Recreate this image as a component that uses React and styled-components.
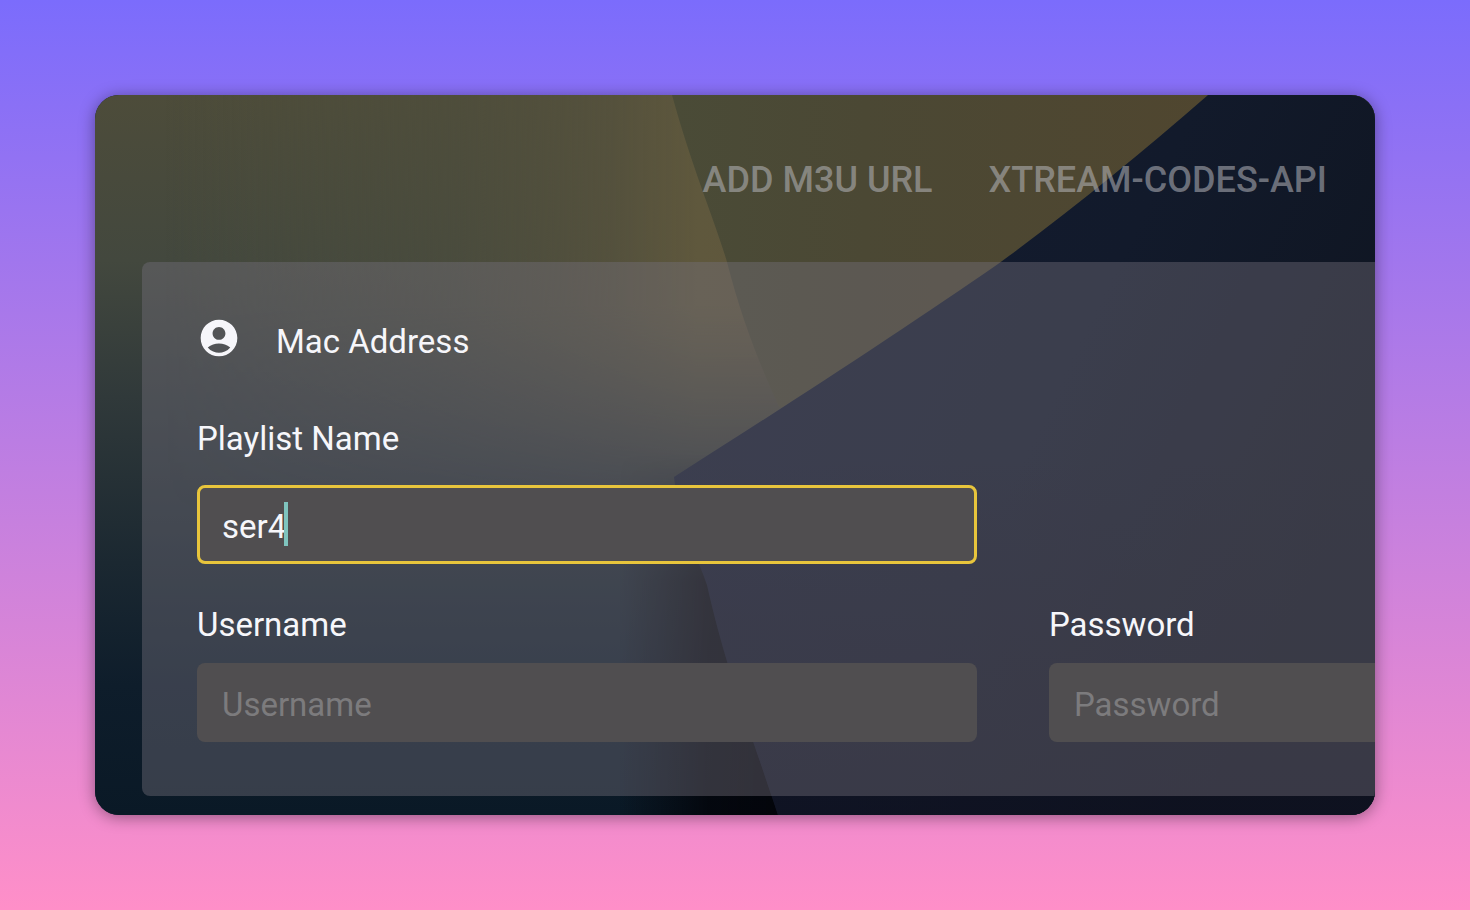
import React, { useState } from 'react';
import styled, { createGlobalStyle } from 'styled-components';
import { MdAccountCircle } from 'react-icons/md';

const GlobalStyle = createGlobalStyle`
  * {
    box-sizing: border-box;
  }
  body {
    margin: 0;
    font-family: Roboto, 'Liberation Sans', sans-serif;
  }
`;

const Page = styled.div`
  display: flex;
  min-height: 100vh;
  padding: 95px;
  background: linear-gradient(180deg, #7b6cfc 0%, #ff8fc8 100%);
`;

const Screen = styled.main`
  position: relative;
  flex: 1;
  min-width: 0;
  padding: 0 0 19px 47px;
  border-radius: 24px;
  overflow: hidden;
  background-color: #0c1c2a;
  box-shadow: 0 2px 16px rgba(0, 0, 0, 0.4);
`;

// WALLPAPER STYLE
const WallpaperSvg = styled.svg`
  position: absolute;
  inset: 0;
  width: 100%;
  height: 100%;
`;

const Content = styled.div`
  position: relative;
`;

// TABS STYLE
const Tabs = styled.nav`
  display: flex;
  justify-content: flex-end;
  align-items: center;
  gap: 56px;
  height: 167px;
  padding: 3px 48px 0 0;
`;

const Tab = styled.button`
  padding: 0;
  border: 0;
  background: none;
  color: rgba(186, 186, 192, 0.54);
  font-family: inherit;
  font-size: 36px;
  font-weight: 500;
  line-height: 48px;
  text-transform: uppercase;
  white-space: nowrap;
  cursor: pointer;
`;

// FORM STYLE
const Panel = styled.form`
  width: 142%;
  padding: 54px 64px 54px 55px;
  border-radius: 8px;
  background-color: rgba(116, 112, 124, 0.42);
`;

const PanelHeader = styled.div`
  display: flex;
  align-items: flex-start;
  gap: 35px;
  margin-bottom: 51px;
  color: #f6f6fa;
`;

const PanelTitle = styled.span`
  font-size: 33px;
  line-height: 52px;
`;

const Fields = styled.div`
  display: grid;
  grid-template-columns: 1fr 1fr;
  gap: 41px 72px;
`;

const Field = styled.div`
  display: flex;
  flex-direction: column;
  grid-column-start: ${({ $column }) => $column};
  gap: ${({ $active }) => ($active ? '26px' : '18px')};
`;

const Label = styled.label`
  color: #f6f6fa;
  font-size: 33px;
  line-height: 40px;
`;

const InputBox = styled.div`
  position: relative;
  display: flex;
`;

const Input = styled.input`
  flex: 1;
  min-width: 0;
  height: 79px;
  padding: 3px 22px 0;
  border: 3px solid ${({ $active }) => ($active ? '#e8c53c' : 'transparent')};
  border-radius: 8px;
  outline: none;
  background-color: #504e50;
  color: #f6f6fa;
  caret-color: #7fc4be;
  font-family: inherit;
  font-size: 33px;
  &::placeholder {
    color: #7c7b7d;
    opacity: 1;
  }
`;

const Caret = styled.span`
  position: absolute;
  top: 17px;
  left: 87px;
  width: 4px;
  height: 44px;
  background-color: #7fc4be;
`;

const Wallpaper = () => (
  <WallpaperSvg viewBox="0 0 1280 720" preserveAspectRatio="none" aria-hidden="true">
    <defs>
      <linearGradient id="left" x1="0" y1="0" x2="0" y2="1">
        <stop offset="0" stopColor="#4d4c3a" />
        <stop offset="0.23" stopColor="#43483e" />
        <stop offset="0.42" stopColor="#30393a" />
        <stop offset="0.65" stopColor="#1b2831" />
        <stop offset="0.82" stopColor="#0e1d2b" />
        <stop offset="1" stopColor="#0a1926" />
      </linearGradient>
      <linearGradient id="glow" x1="0" y1="0" x2="1" y2="0">
        <stop offset="0.1" stopColor="#4f4f3c" stopOpacity="0" />
        <stop offset="0.5" stopColor="#504f3d" stopOpacity="0.5" />
        <stop offset="0.74" stopColor="#56523d" stopOpacity="0.9" />
        <stop offset="0.86" stopColor="#5f583d" stopOpacity="1" />
        <stop offset="1" stopColor="#60563c" stopOpacity="1" />
      </linearGradient>
      <linearGradient id="fade" x1="0" y1="0" x2="0" y2="1">
        <stop offset="0" stopColor="#fff" />
        <stop offset="0.5" stopColor="#fff" />
        <stop offset="1" stopColor="#000" />
      </linearGradient>
      <mask id="fadeDown">
        <rect width="1280" height="420" fill="url(#fade)" />
      </mask>
      <linearGradient id="ridge" x1="0" y1="0" x2="1" y2="0">
        <stop offset="0" stopColor="#4a4b37" />
        <stop offset="0.35" stopColor="#4b4834" />
        <stop offset="1" stopColor="#50462f" />
      </linearGradient>
      <linearGradient id="shadow" x1="0" y1="0" x2="1" y2="0">
        <stop offset="0" stopColor="#03050b" stopOpacity="0" />
        <stop offset="0.5" stopColor="#03050b" stopOpacity="0.85" />
        <stop offset="1" stopColor="#03040a" stopOpacity="1" />
      </linearGradient>
      <linearGradient id="shadowFade" x1="0" y1="0" x2="0" y2="1">
        <stop offset="0" stopColor="#000" />
        <stop offset="0.35" stopColor="#fff" />
      </linearGradient>
      <mask id="shadowMask">
        <rect x="500" y="360" width="200" height="360" fill="url(#shadowFade)" />
      </mask>
      <linearGradient id="night" x1="0" y1="0" x2="1" y2="0.5">
        <stop offset="0" stopColor="#131c33" />
        <stop offset="0.6" stopColor="#121a2b" />
        <stop offset="1" stopColor="#0f1521" />
      </linearGradient>
      <linearGradient id="nightFloor" x1="0" y1="0" x2="0" y2="1">
        <stop offset="0.5" stopColor="#0e101f" stopOpacity="0" />
        <stop offset="1" stopColor="#0e101f" stopOpacity="0.7" />
      </linearGradient>
      <path
        id="nightShape"
        d="M1113 0C1042 62 974 117 903 169C812 232 700 305 579 382C584 430 606 470 612 490C630 570 650 620 683 720H1280V0Z"
      />
    </defs>
    <rect width="1280" height="720" fill="url(#left)" />
    <path d="M0 0H700V420H0Z" fill="url(#glow)" mask="url(#fadeDown)" />
    <path d="M577 0C598 76 618 120 632 167C646 222 664 268 684 312L760 330L1130 60V0Z" fill="url(#ridge)" />
    <path d="M525 360H700V720H525Z" fill="url(#shadow)" mask="url(#shadowMask)" />
    <use href="#nightShape" fill="url(#night)" />
    <use href="#nightShape" fill="url(#nightFloor)" />
  </WallpaperSvg>
);

const TextField = ({ id, label, column, active, ...rest }) => (
  <Field $column={column} $active={active}>
    <Label htmlFor={id}>{label}</Label>
    <InputBox>
      <Input id={id} $active={active} {...rest} />
      {active && <Caret />}
    </InputBox>
  </Field>
);

export default function App() {
  const [name, setName] = useState('ser4');
  return (
    <>
      <GlobalStyle />
      <Page>
        <Screen>
          <Wallpaper />
          <Content>
            <Tabs>
              <Tab type="button">Add M3U URL</Tab>
              <Tab type="button">Xtream-Codes-API</Tab>
            </Tabs>
            <Panel>
              <PanelHeader>
                <MdAccountCircle size={44} />
                <PanelTitle>Mac Address</PanelTitle>
              </PanelHeader>
              <Fields>
                <TextField
                  id="playlist"
                  label="Playlist Name"
                  column={1}
                  active
                  value={name}
                  onChange={(e) => setName(e.target.value)}
                />
                <TextField id="username" label="Username" column={1} placeholder="Username" />
                <TextField
                  id="password"
                  label="Password"
                  column={2}
                  type="password"
                  placeholder="Password"
                />
              </Fields>
            </Panel>
          </Content>
        </Screen>
      </Page>
    </>
  );
}
